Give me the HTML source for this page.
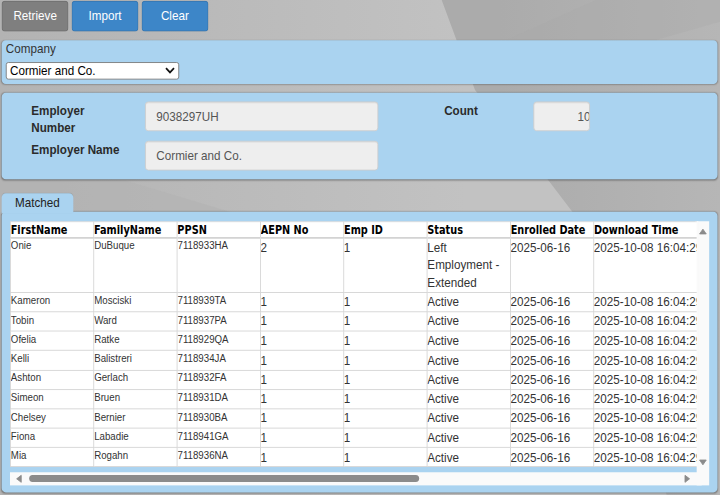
<!DOCTYPE html>
<html lang="en">
<head>
<meta charset="utf-8">
<title>Employees</title>
<style>
*{box-sizing:border-box;}
html,body{margin:0;padding:0;}
body{width:720px;height:495px;overflow:hidden;position:relative;background:#bcbcbc;}
#page{position:absolute;left:0;top:0;width:864px;height:566px;transform-origin:0 0;transform:scale(0.833333,0.874558);font-family:"Liberation Sans",sans-serif;font-size:14px;line-height:20px;color:#333;overflow:hidden;}
#bg{position:absolute;left:0;top:0;width:864px;height:566px;}
.btn{position:absolute;top:1px;height:34.8px;width:79.6px;border-radius:4px;color:#fff;font-size:14px;line-height:32px;text-align:center;border:1px solid rgba(0,0,0,.12);}
.btn.gray{background:#7f7f7f;}
.btn.blue{background:#3d86c8;}
.panel{position:absolute;left:2.2px;width:859px;background:#aad3f0;border-radius:5px;box-shadow:0 1px 2px rgba(0,0,0,.2),0 0 1.5px rgba(0,0,0,.16);}
.lbl{position:absolute;font-weight:bold;color:#2b2b2b;white-space:nowrap;}
.inp{position:absolute;background:#eee;border:1px solid #ccc;border-radius:4px;color:#555;line-height:32px;padding:0 13px;height:34px;box-shadow:inset 0 1px 1px rgba(0,0,0,.075);white-space:nowrap;overflow:hidden;}
.sel{position:absolute;left:7px;top:70.6px;width:207.8px;height:20px;background:#fff;border:1px solid #767676;border-radius:3px;line-height:18px;padding-left:4px;color:#000;}
.tab{position:absolute;left:2.2px;top:221px;width:85.5px;height:23px;background:#aad3f0;border-radius:5px 5px 0 0;line-height:22px;text-align:center;color:#222;box-shadow:0 -0.5px 1px -0.5px rgba(0,0,0,.2);}
#grid{position:absolute;left:12px;top:253px;width:824px;height:282px;overflow:hidden;}
table{border-collapse:collapse;table-layout:fixed;width:1455px;background:#fff;margin-left:-0.2px;}
th,td{border:1px solid #d3d3d3;padding:0;vertical-align:top;text-align:left;overflow:hidden;}
th{font-family:"DejaVu Sans Condensed","DejaVu Sans","Liberation Sans",sans-serif;font-stretch:condensed;font-weight:bold;font-size:13px;color:#000;line-height:16px;padding-top:1.15px;white-space:nowrap;border-bottom-width:2px;}
td{line-height:20px;color:#333;padding-top:0.4px;text-indent:-0.2px;}
tr{height:22.2px;}
tr.h{height:18.65px;}
tr.r1{height:62.15px;}
tr.r1 td{position:relative;top:-0.9px;}
td.nw{white-space:nowrap;}
td.s{font-size:12.6px;line-height:15px;white-space:nowrap;padding-top:1.8px;text-indent:0;}
td.s span{display:inline-block;transform:scaleX(0.925);transform-origin:0 0;}
.vs{position:absolute;left:835.5px;top:253px;width:15.5px;height:301.6px;background:#fafafa;}
.hs{position:absolute;left:12px;top:539.6px;width:830px;height:15px;background:#fafafa;}
.thumb{position:absolute;left:23px;top:3.2px;width:468px;height:8.6px;border-radius:4.3px;background:#8b8b8b;}
.arr{position:absolute;width:11px;height:11px;}
</style>
</head>
<body>
<div id="page">
<svg id="bg" viewBox="0 0 864 566">
<defs>
<linearGradient id="gl" gradientUnits="userSpaceOnUse" x1="0" y1="0" x2="560" y2="0"><stop offset="0" stop-color="#b3b3b3"/><stop offset="1" stop-color="#c2c2c2"/></linearGradient>
<linearGradient id="gr" gradientUnits="userSpaceOnUse" x1="600" y1="0" x2="864" y2="0"><stop offset="0" stop-color="#ababab"/><stop offset="1" stop-color="#b6b6b6"/></linearGradient>
</defs>
<rect width="864" height="566" fill="url(#gl)"/>
<polygon points="530,0 864,0 864,566 800,566 690,246 658,206 570,103" fill="url(#gr)"/>
<polygon points="715,0 607,46 786,46 864,25 864,0" fill="#a9a9a9" opacity="0.35"/>
<polygon points="0,206 150,206 290,246 0,246" fill="#b2b2b2" opacity="0.6"/>
</svg>
<div class="btn gray" style="left:2.4px;">Retrieve</div>
<div class="btn blue" style="left:86.2px;">Import</div>
<div class="btn blue" style="left:170px;">Clear</div>

<div class="panel" style="top:45.5px;height:50px;"></div>
<div style="position:absolute;left:7px;top:46px;">Company</div>
<div class="sel">Cormier and Co.
<svg style="position:absolute;right:4px;top:4.5px" width="12" height="9" viewBox="0 0 12 9"><path d="M1.2 2 L6 6.8 L10.8 2" fill="none" stroke="#111" stroke-width="2.1"/></svg>
</div>

<div class="panel" style="top:106px;height:99px;"></div>
<div class="lbl" style="left:37.5px;top:116px;">Employer<br>Number</div>
<div class="lbl" style="left:37.5px;top:161px;">Employer Name</div>
<div class="inp" style="left:173.6px;top:115.8px;width:280px;">9038297UH</div>
<div class="inp" style="left:173.6px;top:160.8px;width:280px;">Cormier and Co.</div>
<div class="lbl" style="left:533px;top:116px;">Count</div>
<div class="inp" style="left:640px;top:115.8px;width:68px;text-align:right;padding:0;"><span style="margin-right:-1.5px">10</span></div>

<div class="panel" style="top:241.8px;height:321.7px;"></div>
<div class="tab">Matched</div>
<div class="vs"></div>
<div class="vs" style="left:834px;width:4px;height:281px;"></div>
<div class="hs"><div class="thumb"></div></div>
<svg class="arr" style="left:838px;top:258.5px" viewBox="0 0 11 11"><path d="M5.5 3 L9.5 8.5 L1.5 8.5 Z" fill="#8b8b8b" stroke="#8b8b8b" stroke-width="1" stroke-linejoin="round"/></svg>
<svg class="arr" style="left:838px;top:522.5px" viewBox="0 0 11 11"><path d="M5.5 8.5 L9.5 3 L1.5 3 Z" fill="#8b8b8b" stroke="#8b8b8b" stroke-width="1" stroke-linejoin="round"/></svg>
<svg class="arr" style="left:16.8px;top:541.8px" viewBox="0 0 11 11"><path d="M3 5.5 L8.5 1.5 L8.5 9.5 Z" fill="#8b8b8b" stroke="#8b8b8b" stroke-width="1" stroke-linejoin="round"/></svg>
<svg class="arr" style="left:818.7px;top:541.8px" viewBox="0 0 11 11"><path d="M8.5 5.5 L3 1.5 L3 9.5 Z" fill="#8b8b8b" stroke="#8b8b8b" stroke-width="1" stroke-linejoin="round"/></svg>
<div id="grid">
<table>
<colgroup><col style="width:100px"><col style="width:100px"><col style="width:100px"><col style="width:100px"><col style="width:100px"><col style="width:100px"><col style="width:100px"><col style="width:155px"><col style="width:100px"><col style="width:100px"><col style="width:100px"><col style="width:100px"><col style="width:100px"><col style="width:100px"></colgroup>
<tr class="h"><th>FirstName</th><th>FamilyName</th><th>PPSN</th><th>AEPN No</th><th>Emp ID</th><th>Status</th><th>Enrolled Date</th><th>Download Time</th><th></th><th></th><th></th><th></th><th></th><th></th></tr>
<tr class="r1"><td class="s"><span>Onie</span></td><td class="s"><span>DuBuque</span></td><td class="s"><span>7118933HA</span></td><td>2</td><td>1</td><td>Left Employment - Extended</td><td>2025-06-16</td><td class="nw">2025-10-08 16:04:29</td><td></td><td></td><td></td><td></td><td></td><td></td></tr>
<tr><td class="s"><span>Kameron</span></td><td class="s"><span>Mosciski</span></td><td class="s"><span>7118939TA</span></td><td>1</td><td>1</td><td>Active</td><td>2025-06-16</td><td class="nw">2025-10-08 16:04:29</td><td></td><td></td><td></td><td></td><td></td><td></td></tr>
<tr><td class="s"><span>Tobin</span></td><td class="s"><span>Ward</span></td><td class="s"><span>7118937PA</span></td><td>1</td><td>1</td><td>Active</td><td>2025-06-16</td><td class="nw">2025-10-08 16:04:29</td><td></td><td></td><td></td><td></td><td></td><td></td></tr>
<tr><td class="s"><span>Ofelia</span></td><td class="s"><span>Ratke</span></td><td class="s"><span>7118929QA</span></td><td>1</td><td>1</td><td>Active</td><td>2025-06-16</td><td class="nw">2025-10-08 16:04:29</td><td></td><td></td><td></td><td></td><td></td><td></td></tr>
<tr><td class="s"><span>Kelli</span></td><td class="s"><span>Balistreri</span></td><td class="s"><span>7118934JA</span></td><td>1</td><td>1</td><td>Active</td><td>2025-06-16</td><td class="nw">2025-10-08 16:04:29</td><td></td><td></td><td></td><td></td><td></td><td></td></tr>
<tr><td class="s"><span>Ashton</span></td><td class="s"><span>Gerlach</span></td><td class="s"><span>7118932FA</span></td><td>1</td><td>1</td><td>Active</td><td>2025-06-16</td><td class="nw">2025-10-08 16:04:29</td><td></td><td></td><td></td><td></td><td></td><td></td></tr>
<tr><td class="s"><span>Simeon</span></td><td class="s"><span>Bruen</span></td><td class="s"><span>7118931DA</span></td><td>1</td><td>1</td><td>Active</td><td>2025-06-16</td><td class="nw">2025-10-08 16:04:29</td><td></td><td></td><td></td><td></td><td></td><td></td></tr>
<tr><td class="s"><span>Chelsey</span></td><td class="s"><span>Bernier</span></td><td class="s"><span>7118930BA</span></td><td>1</td><td>1</td><td>Active</td><td>2025-06-16</td><td class="nw">2025-10-08 16:04:29</td><td></td><td></td><td></td><td></td><td></td><td></td></tr>
<tr><td class="s"><span>Fiona</span></td><td class="s"><span>Labadie</span></td><td class="s"><span>7118941GA</span></td><td>1</td><td>1</td><td>Active</td><td>2025-06-16</td><td class="nw">2025-10-08 16:04:29</td><td></td><td></td><td></td><td></td><td></td><td></td></tr>
<tr><td class="s"><span>Mia</span></td><td class="s"><span>Rogahn</span></td><td class="s"><span>7118936NA</span></td><td>1</td><td>1</td><td>Active</td><td>2025-06-16</td><td class="nw">2025-10-08 16:04:29</td><td></td><td></td><td></td><td></td><td></td><td></td></tr>
</table>
</div>
</div>
</body>
</html>
